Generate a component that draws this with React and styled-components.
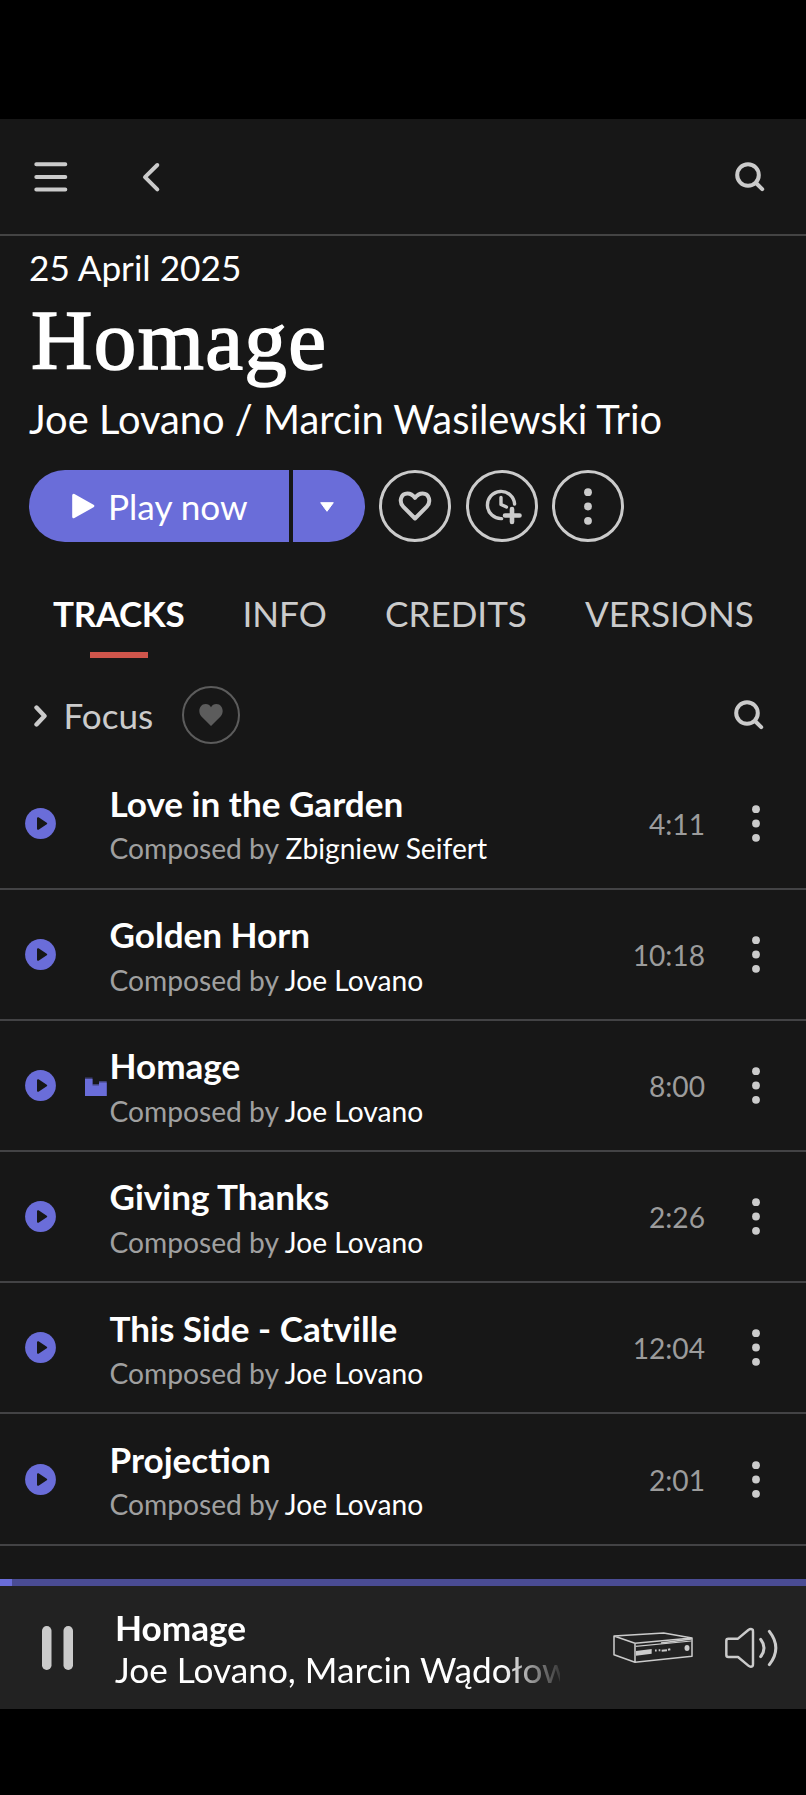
import styled, { createGlobalStyle } from "styled-components";

const tracks = [
  { title: "Love in the Garden", composer: "Zbigniew Seifert", time: "4:11" },
  { title: "Golden Horn", composer: "Joe Lovano", time: "10:18" },
  { title: "Homage", composer: "Joe Lovano", time: "8:00", playing: true },
  { title: "Giving Thanks", composer: "Joe Lovano", time: "2:26" },
  { title: "This Side - Catville", composer: "Joe Lovano", time: "12:04" },
  { title: "Projection", composer: "Joe Lovano", time: "2:01" },
];

const tabs = ["TRACKS", "INFO", "CREDITS", "VERSIONS"];

const GlobalStyle = createGlobalStyle`
  * {
    box-sizing: border-box;
  }
  body {
    margin: 0;
    background: #000;
    font-family: Lato, sans-serif;
    color: #fff;
  }
  button {
    font: inherit;
    color: inherit;
    background: none;
    border: 0;
    padding: 0;
  }
  svg {
    display: block;
    flex: none;
  }
`;

const Screen = styled.div`
  display: flex;
  flex-direction: column;
  width: 806px;
  height: 1795px;
  padding: 119px 0 86px;
  overflow: hidden;
  background: #000;
`;

const Content = styled.main`
  flex: 1;
  min-height: 0;
  overflow: hidden;
  background: #171717;
`;

const TopBar = styled.header`
  display: flex;
  align-items: center;
  height: 117px;
  padding: 0 40px 0 33px;
  border-bottom: 2px solid #444;
  color: #cbcbcb;
`;

const IconButton = styled.button`
  display: flex;
  margin-left: ${(p) => p.$left || "0"};
`;

const Album = styled.section`
  padding: 9px 29px 0;
`;

const ReleaseDate = styled.div`
  font-size: 35.2px;
  line-height: 44px;
`;

const AlbumTitle = styled.h1`
  margin: 3px 0 7px 2px;
  font-family: "Liberation Serif", serif;
  font-weight: 400;
  font-size: 85px;
  line-height: 96px;
  letter-spacing: 1.4px;
  -webkit-text-stroke: 1.6px #fff;
`;

const Artist = styled.div`
  font-size: 39.85px;
  line-height: 48px;
`;

const Actions = styled.div`
  display: flex;
  gap: 14.4px;
  margin-top: 27px;
`;

const PlayGroup = styled.div`
  display: flex;
  gap: 4px;
  height: 72px;
`;

const PlayButton = styled.button`
  display: flex;
  align-items: center;
  gap: 13px;
  width: 260px;
  padding-left: 43px;
  border-radius: 36px 0 0 36px;
  background: #6a6dd9;
  font-size: 35.2px;
`;

const PlayMenu = styled.button`
  display: flex;
  align-items: center;
  justify-content: center;
  width: 72px;
  padding: 2px 4px 0 0;
  border-radius: 0 36px 36px 0;
  background: #6a6dd9;
`;

const RoundButton = styled.button`
  display: flex;
  align-items: center;
  justify-content: center;
  width: ${(p) => p.$size}px;
  height: ${(p) => p.$size}px;
  border: ${(p) => (p.$dim ? "2px solid #5c5c5c" : "3px solid #cbcbcb")};
  border-radius: 50%;
  color: ${(p) => (p.$dim ? "#5c5c5c" : "#cbcbcb")};
`;

const Tabs = styled.nav`
  display: flex;
  gap: 58.2px;
  padding: 48px 0 0 53px;
`;

const Tab = styled.div`
  display: flex;
  flex-direction: column;
  align-items: center;
  height: 68px;
  font-size: 35.1px;
  line-height: 46px;
  font-weight: ${(p) => (p.$active ? 700 : 400)};
  letter-spacing: ${(p) => (p.$active ? "-0.4px" : "0")};
  color: ${(p) => (p.$active ? "#fff" : "#cbcbcb")};

  &::after {
    content: "";
    width: 58px;
    height: 6px;
    margin-top: 16px;
    background: ${(p) => (p.$active ? "#cf554b" : "transparent")};
  }
`;

const FilterBar = styled.div`
  display: flex;
  align-items: center;
  height: 58px;
  margin-top: 28px;
  padding: 0 41px 0 33px;
  color: #cbcbcb;
`;

const Focus = styled.button`
  display: flex;
  align-items: center;
  gap: 14.5px;
  width: 149px;
  font-size: 35.1px;
`;

const Spacer = styled.div`
  flex: 1;
`;

const TrackList = styled.ul`
  margin: 14.5px 0 0;
  padding: 0;
  list-style: none;
`;

const TrackRow = styled.li`
  display: grid;
  grid-template-columns: 60px 24.5px 1fr auto 101px;
  align-items: center;
  height: 131.2px;
  padding-left: 25px;
  border-bottom: 2px solid #434345;
`;

const TrackText = styled.div`
  padding-top: 1px;
`;

const TrackTitle = styled.div`
  font-size: 35.1px;
  line-height: 44px;
  font-weight: 700;
`;

const Credit = styled.div`
  margin-top: 5.5px;
  font-size: 28.2px;
  line-height: 36px;
  color: #a0a0a0;

  span {
    color: #fff;
  }
`;

const Duration = styled.div`
  font-size: 28.15px;
  line-height: 36px;
  padding-top: 1px;
  color: #9c9c9c;
`;

const More = styled.div`
  display: flex;
  justify-content: center;
  padding-left: 1px;
  color: #cbcbcb;
`;

const Progress = styled.div`
  height: 7px;
  background: #4a4c94;

  div {
    height: 100%;
    background: #6a6dd9;
  }
`;

const Player = styled.footer`
  display: flex;
  align-items: center;
  height: 123px;
  padding: 0 27px 0 42px;
  background: #222;
  color: #cbcbcb;
`;

const NowPlaying = styled.div`
  width: 445px;
  margin: 0 51px 0 41px;
  overflow: hidden;
  white-space: nowrap;
  color: #fff;
  font-size: 35.2px;
  line-height: 42px;
  mask-image: linear-gradient(to right, #000 87%, rgba(0, 0, 0, 0.1));

  strong {
    display: block;
  }
`;

const Search = () => (
  <svg width="32" height="32" viewBox="0 0 32 32" fill="none" stroke="currentColor" strokeLinecap="round">
    <circle cx="14" cy="14" r="10.8" strokeWidth="4" />
    <path d="M22.5 22.5L28.2 28.2" strokeWidth="4" />
  </svg>
);

const Dots = () => (
  <svg width="8" height="37" viewBox="0 0 8 37" fill="currentColor">
    <circle cx="4" cy="4.2" r="3.9" />
    <circle cx="4" cy="18.5" r="3.9" />
    <circle cx="4" cy="32.8" r="3.9" />
  </svg>
);

const TrackPlay = () => (
  <svg width="31" height="31" viewBox="0 0 31 31">
    <circle cx="15.5" cy="15.5" r="15.4" fill="#6a6dd9" />
    <path d="M13 10.2L21.2 15.5L13 20.8Z" fill="#171717" stroke="#171717" strokeWidth="2" strokeLinejoin="round" />
  </svg>
);

const Equalizer = () => (
  <svg width="22" height="24" viewBox="0 0 22 24" fill="#6a6dd9">
    <path d="M0 4.5H7.5V11H14V8H21.7V23H0Z" opacity="0.5" />
    <path d="M0 6H7.5V12.5H14V9.5H21.7V23H0Z" />
  </svg>
);

const Amplifier = () => (
  <svg width="85" height="35" viewBox="0 0 255 105" fill="none" stroke="currentColor" strokeWidth="4.6" strokeLinejoin="round">
    <path d="M72 40L9 18L158 9L243 24L72 40V97L9 74V18M72 97L243 79V24" />
    <path d="M74 49L241 33" strokeWidth="3.4" />
    <path d="M150 39L241 27" strokeWidth="4" />
    <path d="M75 63L122 57V71L75 77Z" fill="currentColor" stroke="none" />
    <path d="M132 61.5h5M143 61h5M152 62L168 60.5M171 59.5L178 58" strokeWidth="6" />
    <ellipse cx="228" cy="54" rx="7.5" ry="9" fill="currentColor" stroke="none" />
  </svg>
);

const Volume = () => (
  <svg width="56" height="44" viewBox="0 0 168 132" fill="none" stroke="currentColor" strokeLinecap="round" strokeLinejoin="round">
    <path
      d="M16 38Q10 38 10 44V87Q10 93 16 93H45L76 119Q83 125 89 120Q90 119 90 114V17Q90 12 89 11Q83 7 76 12L45 38Z"
      strokeWidth="7.4"
    />
    <path d="M113 40Q133 66 113 92" strokeWidth="9" />
    <path d="M139 16Q178 66 139 116" strokeWidth="9" />
  </svg>
);

function App() {
  return (
    <>
      <GlobalStyle />
      <Screen>
        <Content>
          <TopBar>
            <IconButton>
              <svg width="36" height="32" viewBox="0 0 36 32" stroke="currentColor" strokeWidth="4" strokeLinecap="round">
                <path d="M3.3 3.2H32.3M3.3 15.9H32.3M3.3 28.5H32.3" />
              </svg>
            </IconButton>
            <IconButton $left="72px">
              <svg width="22" height="32" viewBox="0 0 22 32" fill="none" stroke="currentColor" strokeWidth="4" strokeLinecap="round" strokeLinejoin="round">
                <path d="M16.3 4L4 16.2L16.3 28.4" />
              </svg>
            </IconButton>
            <Spacer />
            <IconButton>
              <Search />
            </IconButton>
          </TopBar>

          <Album>
            <ReleaseDate>25 April 2025</ReleaseDate>
            <AlbumTitle>Homage</AlbumTitle>
            <Artist>Joe Lovano / Marcin Wasilewski Trio</Artist>
            <Actions>
              <PlayGroup>
                <PlayButton>
                  <svg width="23" height="26" viewBox="0 0 23 26" fill="#fff" stroke="#fff" strokeWidth="3" strokeLinejoin="round">
                    <path d="M1.7 2.3L20.8 13L1.7 23.7Z" />
                  </svg>
                  <span>Play now</span>
                </PlayButton>
                <PlayMenu>
                  <svg width="14" height="10" viewBox="0 0 14 10" fill="#fff" stroke="#fff" strokeLinejoin="round">
                    <path d="M0.7 0.7H13.3L7 9.3Z" />
                  </svg>
                </PlayMenu>
              </PlayGroup>
              <RoundButton $size={72}>
                <svg width="34" height="32" viewBox="0 0 34 32" fill="none" stroke="currentColor" strokeWidth="4" strokeLinejoin="round">
                  <path d="M17 28.5L5.2 16.6C0.8 12 2.6 3.4 9.4 3.4C12.8 3.4 15 5 17 7.8C19 5 21.2 3.4 24.6 3.4C31.4 3.4 33.2 12 28.8 16.6Z" />
                </svg>
              </RoundButton>
              <RoundButton $size={72}>
                <svg width="42" height="40" viewBox="1 0 42 40" fill="none" stroke="currentColor" strokeWidth="3.4" strokeLinecap="round" strokeLinejoin="round">
                  <path d="M21.6 32.6A13.6 13.6 0 1 1 34.6 18" />
                  <path d="M21 11.5V18.5L26.5 21" />
                  <path d="M32 23V36M25 29.5H39.5" strokeWidth="4.6" />
                </svg>
              </RoundButton>
              <RoundButton $size={72}>
                <Dots />
              </RoundButton>
            </Actions>
          </Album>

          <Tabs>
            {tabs.map((tab, i) => (
              <Tab key={tab} $active={i === 0}>
                {tab}
              </Tab>
            ))}
          </Tabs>

          <FilterBar>
            <Focus>
              <svg width="16" height="24" viewBox="0 0 16 24" fill="none" stroke="currentColor" strokeWidth="4.4" strokeLinecap="round" strokeLinejoin="round">
                <path d="M3.5 4.5L11.5 13L3.5 21.5" />
              </svg>
              Focus
            </Focus>
            <RoundButton $size={58} $dim>
              <svg width="24" height="22" viewBox="0 0 24 22" fill="currentColor">
                <path d="M12 22L2.2 12.2C-1.6 8 0.6 0 6.6 0C9 0 10.8 1.2 12 3.2C13.2 1.2 15 0 17.4 0C23.4 0 25.6 8 21.8 12.2Z" />
              </svg>
            </RoundButton>
            <Spacer />
            <IconButton>
              <Search />
            </IconButton>
          </FilterBar>

          <TrackList>
            {tracks.map((track) => (
              <TrackRow key={track.title}>
                <TrackPlay />
                {track.playing ? <Equalizer /> : <span />}
                <TrackText>
                  <TrackTitle>{track.title}</TrackTitle>
                  <Credit>
                    Composed by <span>{track.composer}</span>
                  </Credit>
                </TrackText>
                <Duration>{track.time}</Duration>
                <More>
                  <Dots />
                </More>
              </TrackRow>
            ))}
          </TrackList>
        </Content>

        <Progress>
          <div style={{ width: "1.5%" }} />
        </Progress>
        <Player>
          <svg width="32" height="44" viewBox="0 0 32 44" fill="currentColor">
            <rect x="0" y="0" width="9.5" height="44" rx="4.7" />
            <rect x="21.5" y="0" width="9.5" height="44" rx="4.7" />
          </svg>
          <NowPlaying>
            <strong>Homage</strong>
            Joe Lovano, Marcin Wądołow
          </NowPlaying>
          <Amplifier />
          <Spacer />
          <Volume />
        </Player>
      </Screen>
    </>
  );
}

export default App;
